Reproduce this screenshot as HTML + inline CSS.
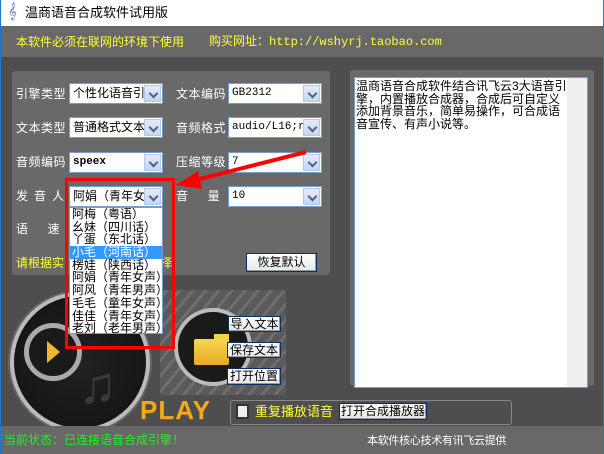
<!DOCTYPE html><html><head><meta charset="utf-8"><style>
*{margin:0;padding:0;box-sizing:border-box}
body{width:604px;height:454px;overflow:hidden;background:#4e4e4e;font-family:"Liberation Sans","Noto Sans CJK SC",sans-serif;font-size:12px;position:relative}
.a{position:absolute}
.t{position:absolute;white-space:nowrap;line-height:14px}
.cb{position:absolute;background:#fff;border:1px solid #7a9cc8;height:21px;font-size:12px;line-height:19px;padding-left:3px;white-space:nowrap;overflow:hidden;color:#000}
.cb i{position:absolute;right:1px;top:1px;width:17px;height:17px;background:linear-gradient(#e4ecf9,#c5d5f1);border:1px solid #b6c8ea}
.cb i:after{content:"";position:absolute;left:5px;top:4px;width:5px;height:5px;border-right:2px solid #4d6185;border-bottom:2px solid #4d6185;transform:rotate(45deg)}
.lb{color:#fff;font-size:12px;letter-spacing:.5px}
.btn{position:absolute;background:linear-gradient(#fff,#e6e6e6);border:1px solid #0c2f62;box-shadow:inset -1px -1px #999;font-size:12px;text-align:center;line-height:14px;color:#000;white-space:nowrap}
.dd div{height:12.7px;line-height:12.7px;font-size:12px;padding-left:2px;white-space:nowrap}
</style></head><body>
<div class="a" style="left:0;top:0;width:604px;height:26px;background:#fff"></div>
<div class="a" style="left:0;top:0;width:1px;height:454px;background:#1979ca"></div>
<div class="a" style="left:603px;top:0;width:1px;height:454px;background:#1979ca"></div>
<div class="t" style="left:8px;top:5px;color:#5a6fb8;font-size:15px">𝄞</div>
<div class="t" style="left:25px;top:6px;font-size:13px;color:#000">温商语音合成软件试用版</div>
<div class="a" style="left:1px;top:26px;width:602px;height:31px;background:#686868"></div>
<div class="t" style="left:16px;top:35px;color:#ffff33;font-size:12px">本软件必须在联网的环境下使用</div>
<div class="t" style="left:209px;top:35px;color:#ffff33;font-size:12px;font-family:'Liberation Mono','Noto Sans CJK SC',monospace">购买网址：http://wshyrj.taobao.com</div>

<div class="a" style="left:12px;top:71px;width:318px;height:204px;background:#696969;border-radius:3px"></div>
<div class="t lb" style="left:16px;top:87px">引擎类型</div>
<div class="cb" style="left:69px;top:83px;width:94px">个性化语音引<i></i></div>
<div class="t lb" style="left:176px;top:87px">文本编码</div>
<div class="cb" style="left:228px;top:83px;width:94px;font-family:'Liberation Mono',monospace;font-size:11px">GB2312<i></i></div>
<div class="t lb" style="left:16px;top:121px">文本类型</div>
<div class="cb" style="left:69px;top:117px;width:94px">普通格式文本<i></i></div>
<div class="t lb" style="left:176px;top:121px">音频格式</div>
<div class="cb" style="left:228px;top:117px;width:94px;font-family:'Liberation Mono',monospace;font-size:11px">audio/L16;ra<i></i></div>
<div class="t lb" style="left:16px;top:155px">音频编码</div>
<div class="cb" style="left:69px;top:152px;width:94px;font-family:'Liberation Mono',monospace;font-size:11px;font-weight:bold">speex<i></i></div>
<div class="t lb" style="left:176px;top:155px">压缩等级</div>
<div class="cb" style="left:228px;top:152px;width:94px;font-family:'Liberation Mono',monospace;font-size:11px">7<i></i></div>
<div class="t lb" style="left:16px;top:189px;letter-spacing:6px">发音人</div>
<div class="cb" style="left:69px;top:186px;width:94px;font-size:12px">阿娟（青年女<i></i></div>
<div class="t lb" style="left:176px;top:189px">音&nbsp;&nbsp;&nbsp;&nbsp;&nbsp;量</div>
<div class="cb" style="left:228px;top:186px;width:94px;font-family:'Liberation Mono',monospace;font-size:11px">10<i></i></div>
<div class="t lb" style="left:16px;top:222px">语&nbsp;&nbsp;&nbsp;&nbsp;&nbsp;速</div>
<div class="t" style="left:16px;top:256px;color:#ffff33;font-size:12px">请根据实</div>
<div class="t" style="left:160px;top:256px;color:#ffff33;font-size:12px">择</div>
<div class="btn" style="left:246px;top:253px;width:71px;height:19px;line-height:17px">恢复默认</div>

<div class="a" style="left:350px;top:70px;width:244px;height:316px;background:#696969;border-radius:3px"></div>
<div class="a" style="left:354px;top:77px;width:234px;height:311px;background:#fff;border:1px solid #7a9cc8"></div>
<div class="a" style="left:567px;top:78px;width:20px;height:309px;background:#eee"></div>
<div class="t" style="left:356px;top:80px;font-size:12px;line-height:12.5px;color:#000">温商语音合成软件结合讯飞云3大语音引<br>擎，内置播放合成器，合成后可自定义<br>添加背景音乐，简单易操作，可合成语<br>音宣传、有声小说等。</div>

<div class="a" style="left:160px;top:290px;width:126px;height:105px;border-radius:3px;background:repeating-linear-gradient(-50deg,#5a5a5a 0 7px,#6e6e6e 7px 10px)"></div>
<div class="a" style="left:10px;top:292px;width:140px;height:140px;border-radius:50%;background:radial-gradient(#222,#111);border:4px solid #bbb;box-shadow:0 0 0 2px #666"></div>
<div class="a" style="left:24px;top:323px;width:58px;height:58px;border-radius:50%;border:5px solid #aaa;background:#1a1a1a"></div>
<div class="a" style="left:47px;top:341px;width:0;height:0;border-left:13px solid #f0b62e;border-top:11px solid transparent;border-bottom:11px solid transparent"></div>
<div class="t" style="left:78px;top:360px;color:#3a3a3a;font-size:52px;line-height:52px">♫</div>
<div class="a" style="left:174px;top:308px;width:78px;height:78px;border-radius:50%;background:#1a1a1a;border:4px solid #bbb"></div>
<div class="a" style="left:194px;top:339px;width:35px;height:26px;background:linear-gradient(#f5d84a,#e8a92a);border-radius:2px"></div>
<div class="a" style="left:214px;top:334px;width:15px;height:6px;background:#f3d445"></div>
<div class="btn" style="left:228px;top:316px;width:53px;height:16px">导入文本</div>
<div class="btn" style="left:227px;top:342px;width:54px;height:16px">保存文本</div>
<div class="btn" style="left:227px;top:368px;width:54px;height:17px">打开位置</div>

<div class="t" style="left:140px;top:396px;font:bold 26px/28px 'Liberation Sans',sans-serif;color:#f0a81e;letter-spacing:1px;text-shadow:0 1px #8a5c00">PLAY</div>
<div class="a" style="left:230px;top:400px;width:282px;height:25px;border:1px solid #888;border-radius:3px"></div>
<div class="a" style="left:236px;top:404px;width:13px;height:15px;background:#eee;border:2px solid #333"></div>
<div class="t" style="left:255px;top:405px;color:#ffff33;font-size:13px">重复播放语音</div>
<div class="btn" style="left:339px;top:403px;width:88px;height:17px">打开合成播放器</div>

<div class="a" style="left:1px;top:426px;width:602px;height:28px;background:#686868"></div>
<div class="t" style="left:4px;top:433px;color:#22ee22;font-size:12px">当前状态：已连接语音合成引擎！</div>
<div class="t" style="left:367px;top:434px;color:#fff;font-size:11px;letter-spacing:-.3px">本软件核心技术有讯飞云提供</div>

<div class="a dd" style="left:69px;top:207px;width:94px;height:127px;background:#fff;border:1px solid #7a9cc8;color:#000">
<div>阿梅（粤语）</div><div>幺妹（四川话）</div><div>丫蛋（东北话）</div><div style="background:#3399ff;color:#fff">小毛（河南话）</div><div>楞娃（陕西话）</div><div>阿娟（青年女声）</div><div>阿风（青年男声）</div><div>毛毛（童年女声）</div><div>佳佳（青年女声）</div><div>老刘（老年男声）</div></div>
<div class="a" style="left:65px;top:178px;width:110px;height:171px;border:3px solid #f00"></div>
<svg class="a" style="left:170px;top:145px" width="140" height="50"><line x1="136" y1="7" x2="22" y2="36" stroke="#f00" stroke-width="4"/><polygon points="6,40 28,26 32,44" fill="#f00"/></svg>
</body></html>
